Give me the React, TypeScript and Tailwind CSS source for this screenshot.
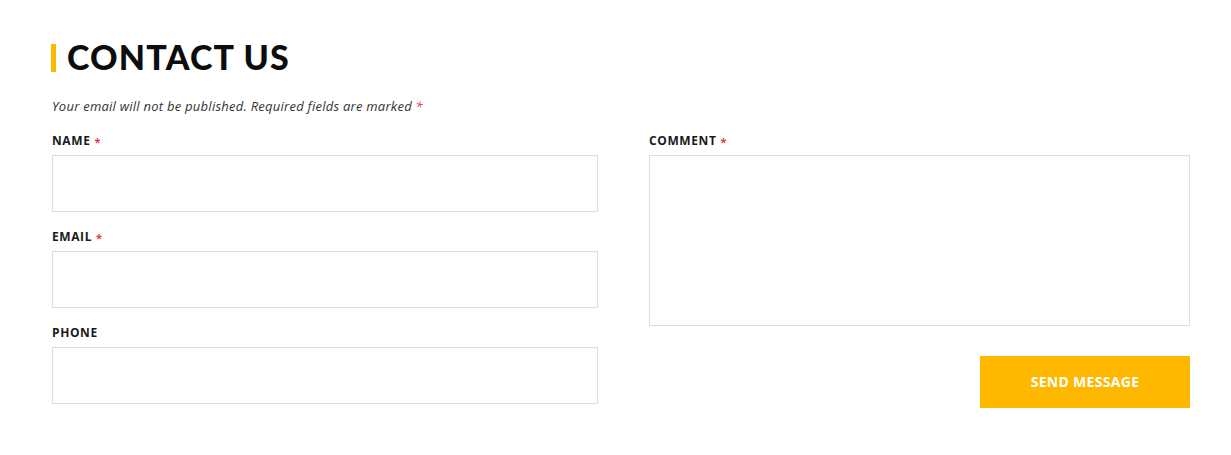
import React from "react";

const Label = ({ text, req }: { text: string; req?: boolean }) => (
  <div className="h-[18px] flex items-center text-[12px] font-bold tracking-[0.6px] text-[#1a1a1a] uppercase leading-none">
    {text}
    {req && <span className="ml-[4px] text-[#e8344b] text-[11px] font-bold">*</span>}
  </div>
);

export default function App() {
  return (
    <div className="w-[1231px] h-[455px] bg-white pl-[52px] pr-[41px] pt-[40px]" style={{ fontFamily: '"Open Sans", sans-serif' }}>
      <div className="flex items-center h-[34px] -ml-[1px]">
        <div className="w-[5px] h-[28px] bg-[#ffb800] mt-[1px]" />
        <h2 className="ml-[11px] text-[34px] font-black tracking-[1.2px] text-[#0d0d0d] leading-none" style={{ fontFamily: 'Lato, sans-serif' }}>
          CONTACT US
        </h2>
      </div>
      <p className="mt-[23px] text-[13px] italic text-[#333] leading-[18px] tracking-[0.25px]">
        Your email will not be published. Required fields are marked <span className="text-[#e8344b]">*</span>
      </p>
      <div className="mt-[17px] grid grid-cols-[546px_541px] gap-x-[51px]">
        <div className="flex flex-col">
          <Label text="Name" req />
          <div className="mt-[5px] h-[57px] border border-[#dddddd]" />
          <div className="mt-[16px]"><Label text="Email" req /></div>
          <div className="mt-[5px] h-[57px] border border-[#dddddd]" />
          <div className="mt-[16px]"><Label text="Phone" /></div>
          <div className="mt-[5px] h-[57px] border border-[#dddddd]" />
        </div>
        <div className="flex flex-col">
          <Label text="Comment" req />
          <div className="mt-[5px] h-[171px] border border-[#dddddd]" />
          <div className="mt-[30px] flex justify-end">
            <button className="w-[210px] h-[52px] bg-[#ffb800] text-white text-[14px] font-bold tracking-[0.3px] pb-[1px]">
              SEND MESSAGE
            </button>
          </div>
        </div>
      </div>
    </div>
  );
}
